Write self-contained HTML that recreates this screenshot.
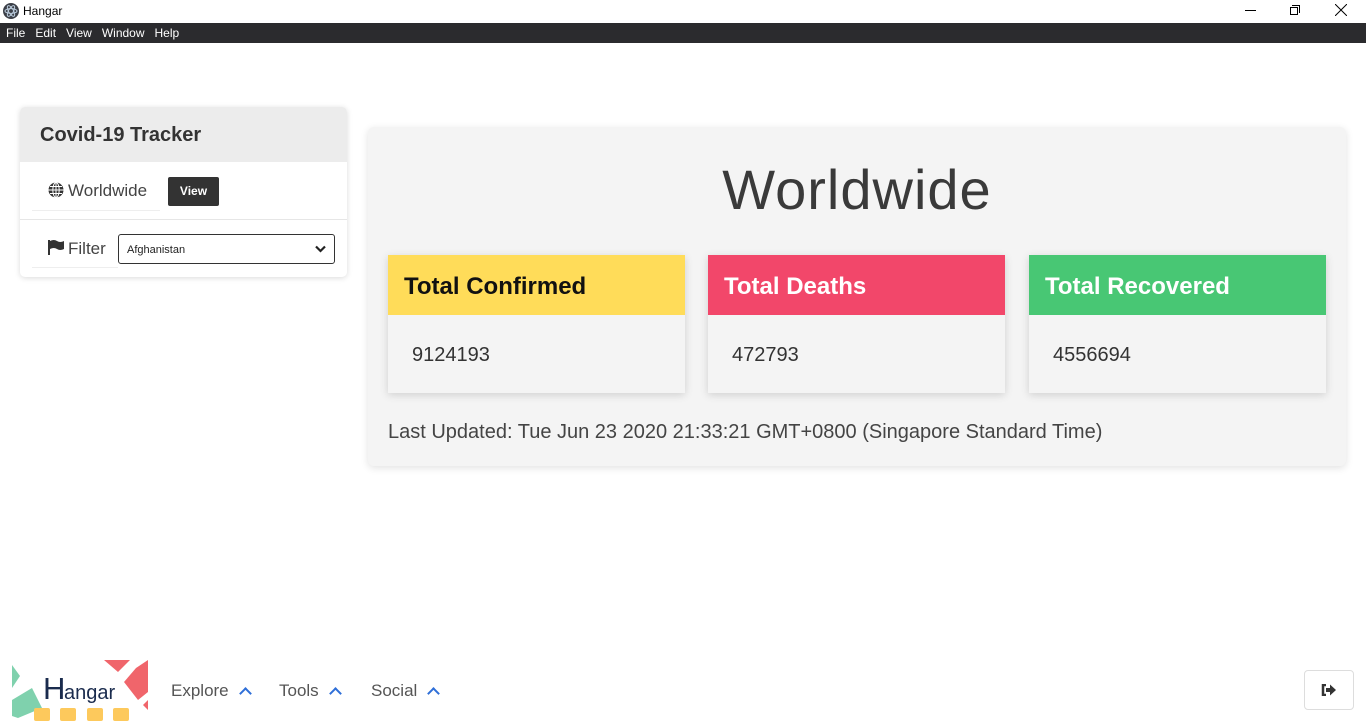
<!DOCTYPE html>
<html><head><meta charset="utf-8"><style>
*{box-sizing:border-box;margin:0;padding:0}
body{width:1366px;height:721px;overflow:hidden;background:#fff;font-family:"Liberation Sans","DejaVu Sans",sans-serif;position:relative;color:#333}
.abs{position:absolute}
.titlebar{top:0;left:0;width:1366px;height:23px;background:#fff}
.menubar{top:23px;left:0;width:1366px;height:20px;background:#2b2b2e;color:#fff;font-size:12px;line-height:20px}
.menubar span{margin-left:6px;margin-right:4px}
.card{left:20px;top:107px;width:327px;height:170px;background:#fff;border-radius:5px;box-shadow:0 1px 6px rgba(0,0,0,.15);overflow:hidden}
.card .hd{height:55px;background:#ececec;font-weight:bold;font-size:20px;color:#333;padding:17px 0 0 20px}
.main{left:368px;top:127px;width:978px;height:339px;background:#f4f4f4;border-radius:6px;box-shadow:0 2px 8px rgba(0,0,0,.12)}
.box{top:128px;width:297px;height:138px;background:#f4f4f4;box-shadow:0 2px 8px rgba(0,0,0,.15)}
.box .h{height:60px;font-weight:bold;font-size:24px;padding:18px 0 0 16px}
.box .b{font-size:20px;padding:29px 0 0 24px;color:#333}
.nav{top:681px;font-size:17px;color:#555}
.chev{display:inline-block;width:9px;height:9px;border-left:2.5px solid #2f6fd8;border-top:2.5px solid #2f6fd8;transform:rotate(45deg);margin-left:12px;position:relative;top:2px}
</style></head><body>
<div class="abs titlebar">
<svg class="abs" style="left:3px;top:3px" width="16" height="16"><circle cx="8" cy="8" r="8" fill="#3c4048"/><ellipse cx="8" cy="8" rx="6" ry="2.4" fill="none" stroke="#bcd" stroke-width="1"/><ellipse cx="8" cy="8" rx="6" ry="2.4" fill="none" stroke="#bcd" stroke-width="1" transform="rotate(60 8 8)"/><ellipse cx="8" cy="8" rx="6" ry="2.4" fill="none" stroke="#bcd" stroke-width="1" transform="rotate(-60 8 8)"/></svg>
<div class="abs" style="left:23px;top:4px;font-size:12px;color:#000">Hangar</div>
<div class="abs" style="left:1245px;top:10px;width:11px;height:1px;background:#000"></div>
<div class="abs" style="left:1290px;top:7px;width:8px;height:8px;border:1px solid #000"></div>
<div class="abs" style="left:1292px;top:5px;width:8px;height:8px;border-top:1px solid #000;border-right:1px solid #000"></div>
<svg class="abs" style="left:1335px;top:4px" width="12" height="12"><path d="M0 0L12 12M12 0L0 12" stroke="#000" stroke-width="1"/></svg>
</div>
<div class="abs menubar"><span>File</span><span>Edit</span><span>View</span><span>Window</span><span>Help</span></div>

<div class="abs card">
<div class="hd">Covid-19 Tracker</div>
<div class="abs" style="left:12px;top:103px;width:128px;height:1px;background:#eee"></div>
<div class="abs" style="left:0;top:112px;width:327px;height:1px;background:#e6e6e6"></div>
<div class="abs" style="left:12px;top:160px;width:86px;height:1px;background:#eee"></div>
<svg class="abs" style="left:28px;top:75px" width="16" height="16" viewBox="0 0 16 16"><circle cx="8" cy="8" r="7.5" fill="#333"/><path d="M0.5 8H15.5M8 .5V15.5M2 4.5H14M2 11.5H14" stroke="#fff" stroke-width="1"/><ellipse cx="8" cy="8" rx="3.2" ry="7.5" fill="none" stroke="#fff" stroke-width="1"/></svg>
<div class="abs" style="left:48px;top:74px;font-size:17px;color:#444">Worldwide</div>
<div class="abs" style="left:148px;top:70px;width:51px;height:29px;background:#333;border-radius:2px;color:#fff;font-size:12px;font-weight:bold;text-align:center;line-height:29px">View</div>
<svg class="abs" style="left:28px;top:133px" width="16" height="15" viewBox="0 0 16 15"><rect x="0" y="0" width="2" height="15" fill="#333"/><path d="M2 1Q6 -1 9 1T16 1V9Q12 11 9 9T2 9Z" fill="#333"/></svg>
<div class="abs" style="left:48px;top:132px;font-size:17px;color:#444">Filter</div>
<div class="abs" style="left:98px;top:127px;width:217px;height:30px;border:1px solid #333;border-radius:3px;font-size:11px;color:#222;padding:9px 0 0 8px">Afghanistan
<svg class="abs" style="right:8px;top:10px" width="11" height="8"><path d="M1 1.5L5.5 6L10 1.5" stroke="#222" stroke-width="2.2" fill="none"/></svg></div>
</div>

<div class="abs main">
<div class="abs" style="left:0;width:978px;top:30px;text-align:center;font-size:56px;font-weight:300;color:#3a3a3a;letter-spacing:1px">Worldwide</div>
<div class="abs box" style="left:20px"><div class="h" style="background:#ffdc59;color:#111">Total Confirmed</div><div class="b">9124193</div></div>
<div class="abs box" style="left:340px"><div class="h" style="background:#f2476a;color:#fff">Total Deaths</div><div class="b">472793</div></div>
<div class="abs box" style="left:661px"><div class="h" style="background:#48c774;color:#fff">Total Recovered</div><div class="b">4556694</div></div>
<div class="abs" style="left:20px;top:294px;font-size:20px;color:#444">Last Updated: Tue Jun 23 2020 21:33:21 GMT+0800 (Singapore Standard Time)</div>
</div>

<svg class="abs" style="left:12px;top:660px" width="136" height="61">
<path d="M0 5L8 16L0 28Z" fill="#7fd1ad"/><path d="M0 40L20 28L30 48L6 58L0 56Z" fill="#7fd1ad"/>
<path d="M92 0H118L106 12Z" fill="#f0656b"/><path d="M124 8L136 0V24L136 32L126 40L112 22Z" fill="#f0656b"/><path d="M136 40V50L131 45Z" fill="#f0656b"/>
<rect x="22" y="48" width="16" height="13" rx="2" fill="#fdc95c"/><rect x="48" y="48" width="16" height="13" rx="2" fill="#fdc95c"/><rect x="75" y="48" width="16" height="13" rx="2" fill="#fdc95c"/><rect x="101" y="48" width="16" height="13" rx="2" fill="#fdc95c"/>
<text x="31" y="39" font-family="Liberation Sans,sans-serif" font-size="31" fill="#1a2b4d">H</text><text x="52" y="39" font-family="Liberation Sans,sans-serif" font-size="20" fill="#1a2b4d">angar</text>
</svg>
<div class="abs nav" style="left:171px">Explore<span class="chev"></span></div>
<div class="abs nav" style="left:279px">Tools<span class="chev"></span></div>
<div class="abs nav" style="left:371px">Social<span class="chev"></span></div>
<div class="abs" style="left:1304px;top:670px;width:50px;height:40px;border:1px solid #ddd;border-radius:4px"></div>
<svg class="abs" style="left:1321px;top:684px" width="16" height="12" viewBox="0 0 16 12"><path d="M5 1H2V11H5" stroke="#333" stroke-width="2.5" fill="none"/><path d="M5 4H9V0.5L15 6L9 11.5V8H5Z" fill="#333"/></svg>
</body></html>
